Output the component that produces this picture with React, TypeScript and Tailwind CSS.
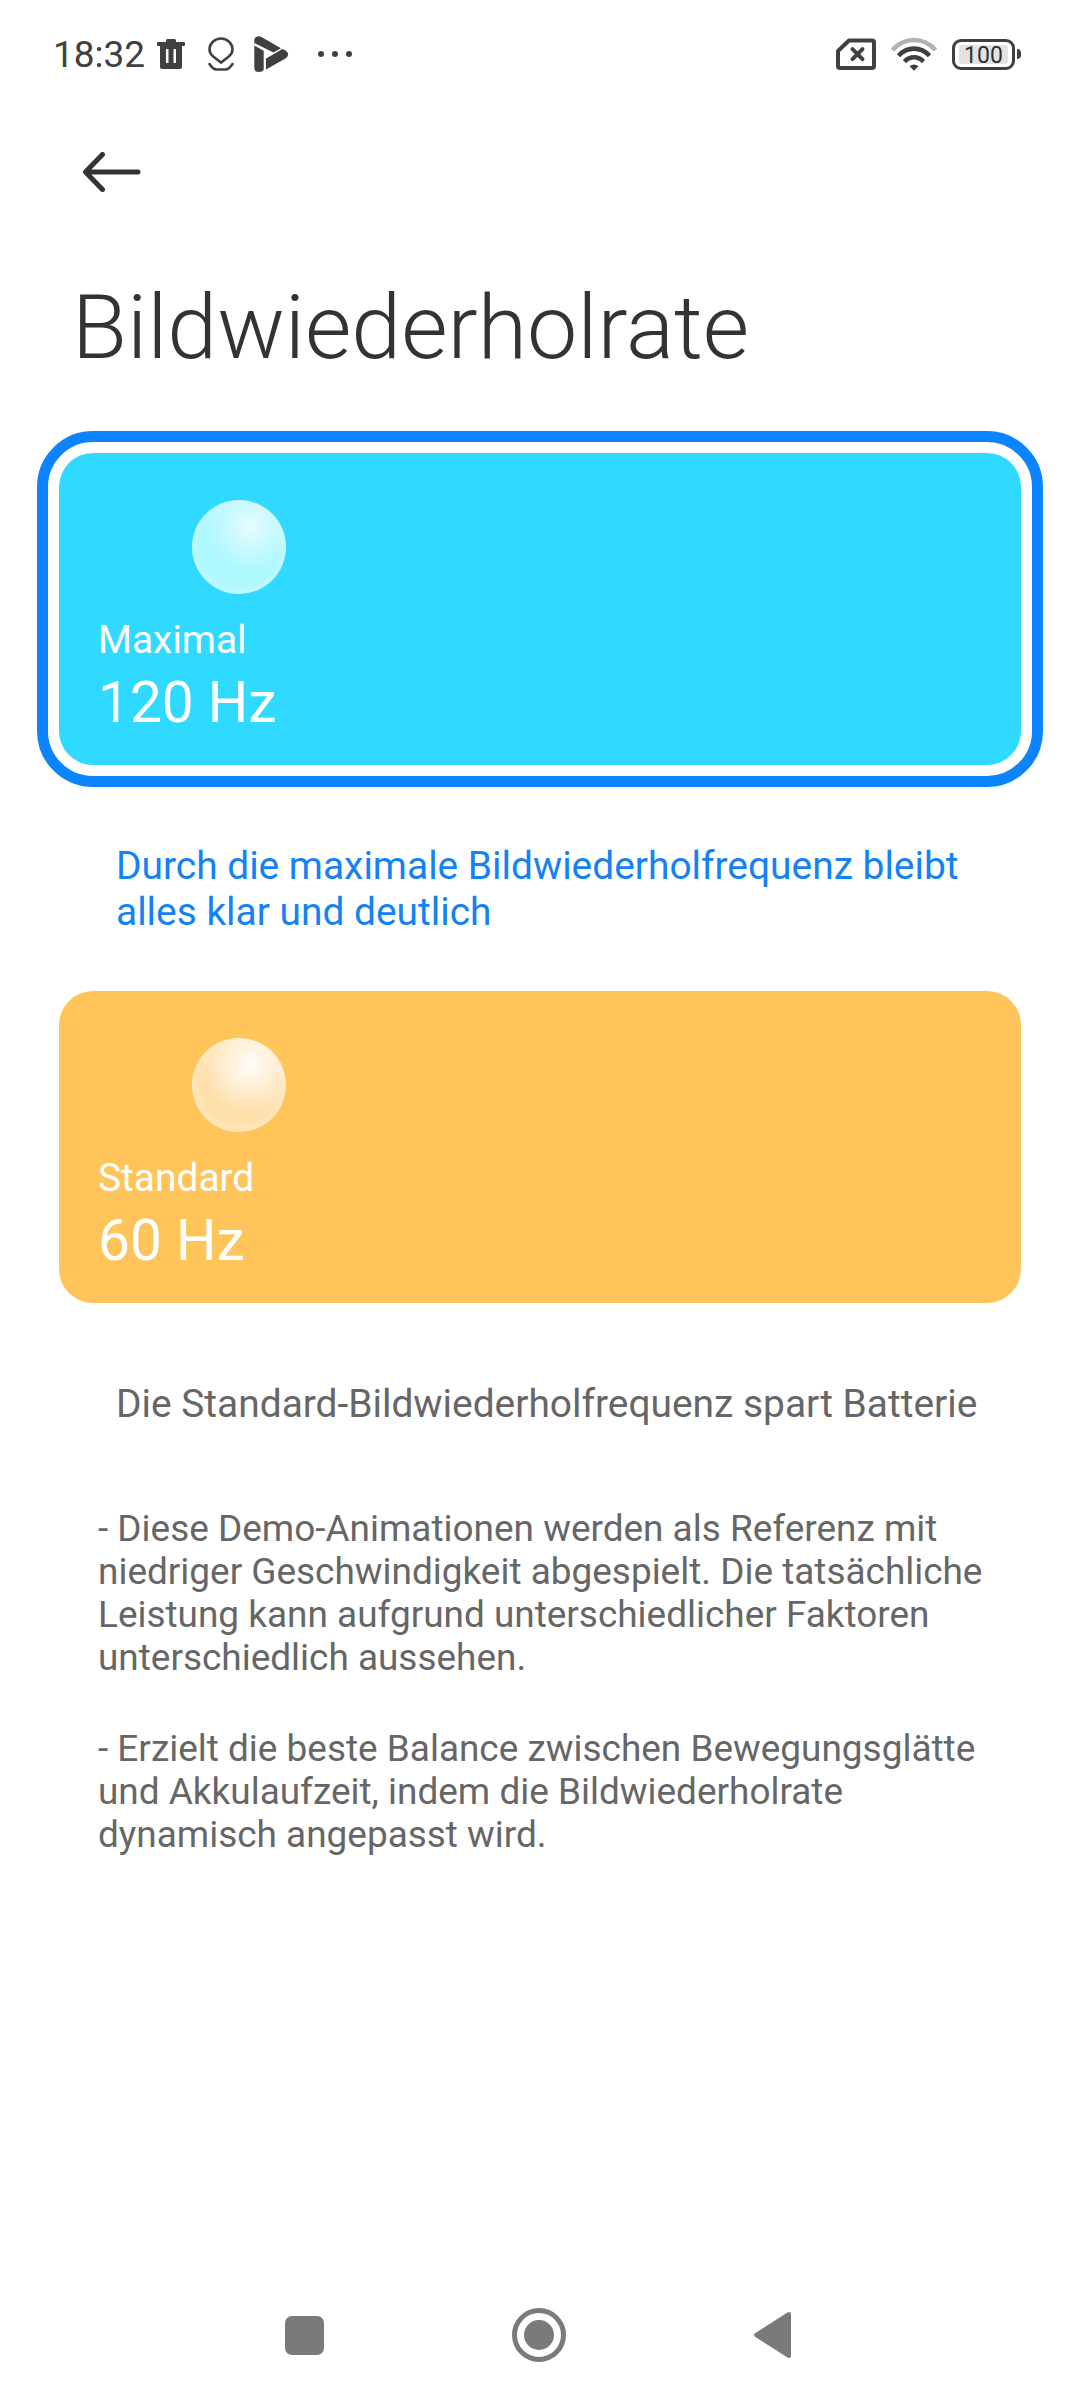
import clsx from "clsx";

interface RateOption {
  label: string;
  rate: string;
  description: string;
  card: string;
  ball: string;
  selected: boolean;
}

const options: RateOption[] = [
  {
    label: "Maximal",
    rate: "120 Hz",
    description: "Durch die maximale Bildwiederholfrequenz bleibt alles klar und deutlich",
    card: "bg-[#2fd9ff]",
    ball: "bg-[radial-gradient(circle_at_62%_28%,#e8fcff_0%,#ccfaff_22%,#aef8ff_50%,#aef8ff_100%)]",
    selected: true,
  },
  {
    label: "Standard",
    rate: "60 Hz",
    description: "Die Standard-Bildwiederholfrequenz spart Batterie",
    card: "bg-[#ffc55a]",
    ball: "bg-[radial-gradient(circle_at_62%_28%,#fffdfb_0%,#fff0d8_25%,#ffe0ab_55%,#ffe0ab_100%)]",
    selected: false,
  },
];

const notes = [
  "- Diese Demo-Animationen werden als Referenz mit niedriger Geschwindigkeit abgespielt. Die tatsächliche Leistung kann aufgrund unterschiedlicher Faktoren unterschiedlich aussehen.",
  "- Erzielt die beste Balance zwischen Bewegungsglätte und Akkulaufzeit, indem die Bildwiederholrate dynamisch angepasst wird.",
];

const StatusBar = () => (
  <header className="flex items-center justify-between h-[108px] pl-[53px] pr-[59px] text-[#404040]">
    <div className="flex items-center">
      <span className="w-[104px] pt-[2px] text-[37px] leading-[44px] font-[450]">18:32</span>
      <svg className="w-7 h-[30px]" viewBox="0 0 28 30" fill="currentColor">
        <path d="M9 3V1.5Q9 0 10.500 0h7Q19 0 19 1.500V3h8q1 0 1 1v2q0 1-1 1H1Q0 7 0 6V4q0-1 1-1z" />
        <path fillRule="evenodd" d="M3 7h22v21q0 2-2 2H5q-2 0-2-2zM9 10v14h2.500V10zM16.500 10v14H19V10z" />
      </svg>
      <svg className="w-[26px] h-[34px] ml-[23px]" viewBox="0 0 26 34" fill="none" stroke="currentColor" strokeWidth="2.600">
        <path d="M13 25.500L5.500 19.800C2.800 17.500 1.500 15 1.500 12.500a11.500 11 0 0 1 23 0c0 2.500-1.300 5-4 7.300z" />
        <path d="M1.500 27q3.500 5.500 7 5.500h9q3.500 0 7-5.500" strokeLinecap="round" />
      </svg>
      <svg className="w-[35px] h-9 ml-5" viewBox="0 0 35 36" fill="currentColor">
        <path d="M.3 7V4.500C.3.500 4.500-.8 7.500 1L27 12.300 19.500 16.500z" />
        <path d="M.3 9.500L9.700 14.800V34Q8.500 36 5 36 .3 36 .3 31.500z" />
        <path d="M12 22.500L28.500 13Q34.500 15.500 34.200 18.500 34 21 31 22.700L12 33.500z" />
      </svg>
      <svg className="w-[36px] h-2 ml-[28px]" viewBox="0 0 36 8" fill="currentColor">
        <circle cx="4" cy="4" r="3" />
        <circle cx="18" cy="4" r="3" />
        <circle cx="32" cy="4" r="3" />
      </svg>
    </div>
    <div className="flex items-center">
      <svg className="w-10 h-8" viewBox="0 0 40 32" fill="none" stroke="currentColor" strokeWidth="4">
        <path d="M13 2.500h23q2 0 2 2v23.500q0 2-2 2H4q-2 0-2-2V13z" strokeLinejoin="round" />
        <path d="M16.500 11.200l10 10M26.500 11.200l-10 10" strokeLinecap="round" />
      </svg>
      <svg className="w-[46px] h-[34px] ml-[15px]" viewBox="0 0 46 34" fill="none" stroke="currentColor" strokeWidth="4.600">
        <path d="M1.500 13Q10.500 3 23 3t21.500 10" stroke="#b3b3b3" />
        <path d="M7.500 18.800Q14 11.600 23 11.600t15.500 7.200" />
        <path d="M13.500 24.600Q17.500 20.300 23 20.300t9.500 4.300" />
        <path d="M18.500 29.300q4.500-3.600 9 0L23 33.800z" fill="currentColor" stroke="none" />
      </svg>
      <div className="flex items-center justify-center w-[63px] h-[31px] ml-[15px] border-[3px] border-[#404040] rounded-[9px] p-1">
        <span className="flex items-center justify-center w-[49px] h-[19px] bg-[#e3e3e3] rounded-[3px] pt-[2px] text-[23px] leading-none text-[#303030]">
          100
        </span>
      </div>
      <span className="w-1 h-[10px] ml-[2px] rounded-r-full rounded-l-[1px] bg-[#404040]" />
    </div>
  </header>
);

const RateCard = ({ option }: { option: RateOption }) => (
  <div>
    {/* ring around the active card, same footprint when inactive */}
    <div
      className={clsx(
        "-m-[22px] border-[11px] p-[11px] rounded-[56px]",
        option.selected ? "border-[#0d84ff]" : "border-transparent"
      )}
    >
      <div className={clsx("h-[312px] rounded-[34px] pt-[46.5px] pl-[39px] text-white", option.card)}>
        <div
          className={clsx(
            "w-[94px] h-[94px] ml-[94px] rounded-full shadow-[inset_0_0_14px_rgba(255,255,255,0.4)]",
            option.ball
          )}
        />
        <p className="mt-[23.5px] text-[38.9px] leading-[46px]">{option.label}</p>
        <p className="mt-[7px] text-[56.8px] leading-[66px]">{option.rate}</p>
      </div>
    </div>
    <p
      className={clsx(
        "mt-[78px] px-[57px] -mr-10 text-[38.9px] leading-[46px]",
        option.selected ? "text-[#1482f5]" : "text-[#666666]"
      )}
    >
      {option.description}
    </p>
  </div>
);

const NavigationBar = () => (
  <nav className="flex items-center h-[130px] pl-[285px] text-[#7a7a7a]">
    <div className="size-[39px] rounded-[7px] bg-[#7a7a7a]" />
    <svg className="size-[54px] ml-[188px]" viewBox="0 0 54 54">
      <circle cx="27" cy="27" r="24.500" fill="none" stroke="currentColor" strokeWidth="5" />
      <circle cx="27" cy="27" r="15" fill="currentColor" />
    </svg>
    <svg className="w-[37px] h-[46px] ml-[188px]" viewBox="0 0 37 46" fill="currentColor">
      <path d="M33.500.6Q37-1 37 2.500v41q0 3.500-3.500 1.900L1 24.700q-2-1.700 0-3.400z" />
    </svg>
  </nav>
);

const App = () => {
  return (
    <div className="flex flex-col w-[1080px] h-[2400px] bg-white font-[Roboto,sans-serif] overflow-hidden">
      <StatusBar />
      <div className="flex items-center h-32 pl-[82px] text-[#333333]">
        <svg className="w-[60px] h-10" viewBox="0 0 60 40" fill="none" stroke="currentColor" strokeWidth="5" strokeLinecap="round" strokeLinejoin="round">
          <path d="M20.500 2.500L3.500 20l17 17.500M4 20h52" />
        </svg>
      </div>
      <h1 className="mt-[39px] pl-[72px] text-[89.7px] leading-[106px] font-light text-[#333333]">
        Bildwiederholrate
      </h1>
      <main className="flex flex-col gap-14 mt-[72px] px-[59px]">
        {options.map((option) => (
          <RateCard key={option.label} option={option} />
        ))}
      </main>
      <section className="flex flex-col gap-12 mt-20 px-[98px] text-[36.95px] leading-[43px] text-[#666666]">
        {notes.map((note) => (
          <p key={note} className="-mr-4">{note}</p>
        ))}
      </section>
      <div className="mt-auto">
        <NavigationBar />
      </div>
    </div>
  );
};

export default App;
